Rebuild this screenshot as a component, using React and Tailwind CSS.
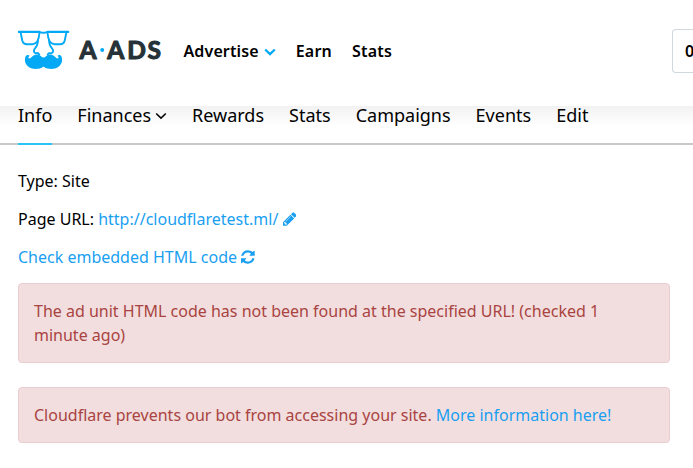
function Logo() {
  return (
    <svg className="block h-[40px] w-[146px] shrink-0" viewBox="0 0 146 40" fill="none">
      <g stroke="#03a9f4" strokeWidth="1.9" strokeLinejoin="round" strokeLinecap="round">
        <path d="M0.8 1.9H21.5C23.5 3 27.3 3 29.3 1.9H50.2" strokeWidth="2.2" />
        <path d="M2.6 2.4L4.2 10.2C4.8 12.8 6.4 14.2 9 14.2H14.5C18.6 14.2 20.9 11 21.5 2.8" />
        <path d="M48.4 2.4L46.8 10.2C46.2 12.8 44.6 14.2 42 14.2H36.5C32.4 14.2 30.1 11 29.5 2.8" />
        <path d="M20 10C19.8 14 19 16.3 17 18.4C15.3 20.2 15.6 22.6 17.8 23.4C19.2 22.7 20.6 23.2 21.3 24.6" />
        <path d="M31 10C31.2 14 32 16.3 34 18.4C35.7 20.2 35.4 22.6 33.2 23.4C31.8 22.7 30.4 23.2 29.7 24.6" />
      </g>
      <path fill="#03a9f4" d="M25.5 27.4C27.5 27.4 28.4 25.4 30.4 24.7C33.6 23.8 36.2 25.8 37.9 27.6C39.3 28.9 40.6 28.5 40.6 27.5C40.6 26.8 40 26.2 39.4 25.9C40.4 24.4 42.9 24.8 43.6 26.8C44.7 30 44.1 33.2 41.9 35.4C39 38.6 34.8 39.2 31 38.8C28.4 38.4 26.7 37.6 25.5 36.4C24.3 37.6 22.6 38.4 20 38.8C16.2 39.2 12 38.6 9.1 35.4C6.9 33.2 6.3 30 7.4 26.8C8.1 24.8 10.6 24.4 11.6 25.9C11 26.2 10.4 26.8 10.4 27.5C10.4 28.5 11.7 28.9 13.1 27.6C14.8 25.8 17.4 23.8 20.6 24.7C22.6 25.4 23.5 27.4 25.5 27.4Z" />
      <text
        x="61.4 89.3 109.3 129.6"
        y="29.2"
        className="font-['Lato',sans-serif] text-[24.5px] font-bold"
        fill="#263238"
        stroke="#263238"
        strokeWidth="1.1"
        strokeLinejoin="round"
      >
        AADS
      </text>
      <circle cx="84.2" cy="20" r="2" fill="#03a9f4" />
    </svg>
  );
}

function Chevron({ className, width = 2 }) {
  return (
    <svg className={className} viewBox="0 0 12 8" fill="none" stroke="currentColor" strokeWidth={width}>
      <path d="M1.2 1.5L6 6.1L10.8 1.5" />
    </svg>
  );
}

function Pencil() {
  return (
    <svg className="inline-block h-4 w-[13.7px] align-[-2px]" viewBox="0 0 1536 1792" fill="currentColor">
      <path d="M363 1536l91-91-235-235-91 91v107h128v128h107zm523-928q0-22-22-22-10 0-17 7l-542 542q-7 7-7 17 0 22 22 22 10 0 17-7l542-542q7-7 7-17zm-54-192l416 416-832 832h-416v-416zm683 96q0 53-37 90l-166 166-416-416 166-165q36-38 90-38 53 0 91 38l235 234q37 39 37 91z" />
    </svg>
  );
}

function Refresh() {
  return (
    <svg className="inline-block h-4 w-[13.7px] align-[-2px]" viewBox="0 0 1536 1792" fill="currentColor">
      <path d="M1511 1056q0 5-1 7-64 268-268 434.5t-478 166.5q-146 0-282.5-55t-243.5-157l-129 129q-19 19-45 19t-45-19-19-45v-448q0-26 19-45t45-19h448q26 0 45 19t19 45-19 45l-137 137q71 66 161 102t187 36q134 0 250-65t186-179q11-17 53-117 8-23 30-23h192q13 0 22.5 9.5t9.5 22.5zm25-800v448q0 26-19 45t-45 19h-448q-26 0-45-19t-19-45 19-45l138-138q-148-137-349-137-134 0-250 65t-186 179q-11 17-53 117-8 23-30 23h-199q-13 0-22.5-9.5t-9.5-22.5v-7q65-268 270-434.5t480-166.5q146 0 284 55.5t245 156.5l130-129q19-19 45-19t45 19 19 45z" />
    </svg>
  );
}

const tabs = ["Rewards", "Stats", "Campaigns", "Events", "Edit"];

export default function App() {
  return (
    <div className="h-[468px] w-[693px] overflow-hidden bg-white font-['Noto_Sans',sans-serif] text-base leading-6 text-black">
      <header className="flex h-[106px] items-start pl-[18px]">
        <div className="mt-[30px]">
          <Logo />
        </div>
        <nav className="ml-[19.5px] mt-[39px] flex font-semibold">
          <a className="flex items-center tracking-[0.12px]">
            Advertise
            <Chevron className="ml-[5px] mt-[2px] h-2 w-3 text-[#03a9f4]" width={2.3} />
          </a>
          <a className="ml-5 tracking-[0.2px]">Earn</a>
          <a className="ml-5 tracking-[0.2px]">Stats</a>
        </nav>
        <div className="ml-auto mt-[29px] flex h-11 w-[21px] shrink-0 items-center overflow-hidden rounded-l border border-r-0 border-[#cfd8dc] pl-3 font-semibold">
          0
        </div>
      </header>
      <nav className="flex h-[39px] border-b-2 border-[#c8c8c8] bg-[linear-gradient(to_bottom,#f2f2f2,#ffffff_20px)] text-lg leading-[18px]">
        <div className="ml-[18px] h-[39px] shrink-0 border-b-2 border-[#29c5f6]">Info</div>
        <div className="ml-[25px] flex h-[18px] items-center">
          Finances
          <Chevron width={1.5} className="ml-1 mt-[2px] h-2 w-3" />
        </div>
        {tabs.map((tab) => (
          <div key={tab} className="ml-[25px]">{tab}</div>
        ))}
      </nav>
      <main className="pl-[18px] pr-[23px] pt-6">
        <p>Type: Site</p>
        <p className="mt-[14px]">
          Page URL: <a className="text-[#1a9ff1]">http://cloudflaretest.ml/ <Pencil /></a>
        </p>
        <p className="mt-[14px] text-[#1a9ff1]">Check embedded HTML code <Refresh /></p>
        <div className="mt-[14px] rounded border border-[#ebccd1] bg-[#f2dede] p-[15px] text-[#a94442]">
          The ad unit HTML code has not been found at the specified URL! (checked 1 minute ago)
        </div>
        <div className="mt-6 rounded border border-[#ebccd1] bg-[#f2dede] p-[15px] text-[#a94442]">
          Cloudflare prevents our bot from accessing your site. <a className="text-[#1a9ff1]">More information here!</a>
        </div>
      </main>
    </div>
  );
}
